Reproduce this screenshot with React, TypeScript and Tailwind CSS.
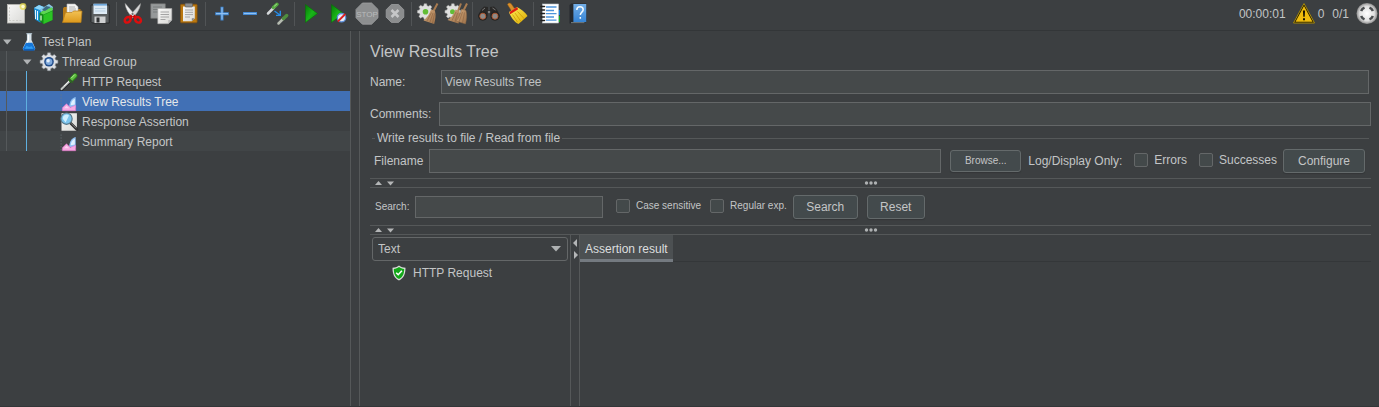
import React from "react";

type IconProps = { children: React.ReactNode; className?: string };

function Icon({ children, className = "h-6 w-6" }: IconProps) {
  return (
    <svg viewBox="0 0 24 24" className={className} aria-hidden="true">
      {children}
    </svg>
  );
}

function Defs() {
  return (
    <svg className="absolute h-0 w-0" aria-hidden="true">
      <defs>
        <linearGradient id="green" x1="0" y1="0" x2="1" y2="1">
          <stop offset="0" stopColor="#067a06" />
          <stop offset="0.5" stopColor="#19b419" />
          <stop offset="1" stopColor="#0a8a0a" />
        </linearGradient>
        <linearGradient id="paper" x1="0" y1="0" x2="1" y2="1">
          <stop offset="0" stopColor="#f8f8f7" />
          <stop offset="1" stopColor="#d9d9d6" />
        </linearGradient>
        <linearGradient id="folder" x1="0" y1="0" x2="0" y2="1">
          <stop offset="0" stopColor="#f2c255" />
          <stop offset="1" stopColor="#dd991c" />
        </linearGradient>
        <linearGradient id="sky" x1="0" y1="0" x2="0" y2="1">
          <stop offset="0" stopColor="#a5d1f5" />
          <stop offset="1" stopColor="#3f8ad6" />
        </linearGradient>
        <linearGradient id="straw" x1="0" y1="0" x2="1" y2="1">
          <stop offset="0" stopColor="#d6ab7e" />
          <stop offset="1" stopColor="#9c7048" />
        </linearGradient>
        <linearGradient id="yellow" x1="0" y1="0" x2="1" y2="1">
          <stop offset="0" stopColor="#fff15a" />
          <stop offset="1" stopColor="#dba800" />
        </linearGradient>
        <radialGradient id="silver">
          <stop offset="0" stopColor="#ffffff" />
          <stop offset="0.7" stopColor="#dedede" />
          <stop offset="1" stopColor="#8d8d8d" />
        </radialGradient>
      </defs>
    </svg>
  );
}

const NewIcon = () => (
  <Icon>
    <rect x="3.5" y="2.5" width="17" height="18.5" fill="url(#paper)" stroke="#b9b9b4" strokeWidth="0.8" />
    <path d="M5.5 5v14M5 18.5h13" stroke="#c6c6c2" strokeWidth="0.8" strokeDasharray="2 1.5" />
    <circle cx="19" cy="4.5" r="3.4" fill="#e8dc4c" opacity="0.75" />
    <circle cx="19" cy="4.5" r="1.7" fill="#fffbd0" />
  </Icon>
);

const TemplatesIcon = () => (
  <Icon>
    <path d="M2 6l5-3 5 2v14l-4 1.5-5-3z" fill="#1b8fd6" />
    <path d="M2 6l5-3 5 2-4 3z" fill="#8fd6fa" />
    <path d="M8 8l4-3 5-3 4 3v3L10 11z" fill="#8cc9e8" />
    <path d="M3.5 8v9M5.5 9v9" stroke="#e3f5ff" strokeWidth="1" />
    <path d="M7.5 11l4-2.5 9-3v12.5l-9 4-4-3z" fill="#128a18" />
    <path d="M11.5 13l9-4v9l-9 4z" fill="#2cc424" />
    <path d="M8 11l3.5-2.5 8.5-3 .5 3-9 4z" fill="#5ed653" />
    <path d="M9 13.5v5" stroke="#e7ffe1" strokeWidth="1.2" />
    <path d="M14 4l5 1-6 4-3-1z" fill="#3b6980" />
  </Icon>
);

const OpenIcon = () => (
  <Icon>
    <path d="M3 6.5l1-1.5h5l1 2h10.5v12H3z" fill="#b87b17" />
    <path d="M7 2h8l3 2.8V13H7z" fill="#f4f4f2" stroke="#bbb" strokeWidth="0.6" />
    <path d="M9 5h6M9 7h7M9 9h7" stroke="#a7a7a7" strokeWidth="0.9" />
    <path d="M5.5 10.5H12l1.5-1.5h8.5l-1 11.5H2.5z" fill="url(#folder)" stroke="#b87d17" strokeWidth="0.7" />
  </Icon>
);

const SaveIcon = () => (
  <Icon>
    <path d="M3 3h18.2v18H4.5L3 19.5z" fill="#5b5f61" stroke="#242627" strokeWidth="0.9" />
    <rect x="5.5" y="1.8" width="13.5" height="10.2" fill="#deebf5" />
    <rect x="5.5" y="1.8" width="13.5" height="1.8" fill="#6fa8db" />
    <path d="M7 6.5h10.5M7 9h10.5" stroke="#b9d0e2" strokeWidth="1" />
    <rect x="6.5" y="14.5" width="11" height="6.5" fill="#cfd1d2" />
    <rect x="8.500" y="15.500" width="3" height="5" fill="#303334" />
  </Icon>
);

const CutIcon = () => (
  <Icon>
    <path d="M4.200 1.500L14.500 13.500l-3 2.500C8 11.500 4.500 7 4.200 1.500z" fill="#efefef" stroke="#a5a5a5" strokeWidth="0.500" />
    <path d="M19.500 1.500L8.800 13.500l3 2.500c3.800-4.500 7.400-9 7.700-14.500z" fill="#d8d8d8" stroke="#999" strokeWidth="0.500" />
    <circle cx="11.700" cy="12" r="0.900" fill="#6b6b6b" />
    <path d="M11 13.700L8 16.500M12.500 13.700l3 2.800" stroke="#c90808" strokeWidth="3.200" />
    <ellipse cx="6.700" cy="17.800" rx="3.200" ry="2.500" fill="none" stroke="#dc0e0e" strokeWidth="2.500" transform="rotate(-40 6.700 17.800)" />
    <ellipse cx="17" cy="17.800" rx="3.200" ry="2.500" fill="none" stroke="#dc0e0e" strokeWidth="2.500" transform="rotate(40 17 17.800)" />
  </Icon>
);

const CopyIcon = () => (
  <Icon>
    <path d="M1.800 1.800h14.500v14.500H1.800z" fill="#96999a" stroke="#777" strokeWidth="0.600" />
    <path d="M4 5h9M4 7.500h6M4 10h6" stroke="#777a7b" strokeWidth="0.900" />
    <path d="M8.800 6.500h14V18l-3.500 3.700H8.800z" fill="url(#paper)" stroke="#aaa" strokeWidth="0.600" />
    <path d="M11.500 10h8.500M11.500 12.500h8.500M11.500 15h8.500M11.500 17.500h5" stroke="#a4a4a4" strokeWidth="1" />
    <path d="M22.800 18h-3.500v3.700z" fill="#bcbcbc" />
  </Icon>
);

const PasteIcon = () => (
  <Icon>
    <rect x="3.500" y="2.300" width="16.600" height="18.500" rx="1" fill="#b9770f" stroke="#87530b" strokeWidth="0.800" />
    <path d="M6 4.500h11.800v11.800l-3 3H6z" fill="url(#paper)" />
    <rect x="8" y="1.200" width="7.500" height="3.800" rx="1" fill="#8b8e90" stroke="#555" strokeWidth="0.600" />
    <path d="M8 8h8M8 10.300h8M8 12.600h8M8 15h5" stroke="#a5a5a5" strokeWidth="1" />
    <path d="M17.800 16.300h-3v3z" fill="#888" />
  </Icon>
);

const PlusIcon = () => (
  <Icon>
    <path d="M12 4.800v13.700M5.200 11.700h13.600" stroke="#3f86d2" strokeWidth="3" />
    <path d="M12 5.600v12M6 11.700h12" stroke="#8fc1f2" strokeWidth="1.200" />
  </Icon>
);

const MinusIcon = () => (
  <Icon>
    <path d="M5 11.500h14" stroke="#3f86d2" strokeWidth="3" />
    <path d="M5.800 11.500h12.400" stroke="#8fc1f2" strokeWidth="1.200" />
  </Icon>
);

const ToggleIcon = () => (
  <Icon>
    <path d="M2 11.500L8 5.500" stroke="#d5d8da" strokeWidth="2.500" strokeLinecap="round" />
    <path d="M7.500 5.500L11 2.300" stroke="#57ab42" strokeWidth="3.400" strokeLinecap="round" />
    <path d="M8.500 4L10.500 2.300" stroke="#a5e08f" strokeWidth="1" strokeLinecap="round" />
    <path d="M8.500 9l5 3.700M14.300 8.800v4.600H10" fill="none" stroke="#268de8" strokeWidth="1.400" />
    <path d="M12.500 21.500l5-5" stroke="#b5bbb0" strokeWidth="2.500" strokeLinecap="round" />
    <path d="M17.500 16.500L20.700 13.500" stroke="#4f8f3e" strokeWidth="3.400" strokeLinecap="round" />
  </Icon>
);

const PlayIcon = () => (
  <Icon>
    <path d="M6.500 2.500l12 9-12 9z" fill="url(#green)" stroke="#087108" strokeWidth="0.600" />
  </Icon>
);

const PlayNoTimersIcon = () => (
  <Icon>
    <path d="M4.500 2.500l12 9-12 9z" fill="url(#green)" stroke="#087108" strokeWidth="0.600" />
    <circle cx="14.500" cy="15.700" r="4.200" fill="#e4edfa" stroke="#5d8fda" strokeWidth="1.300" />
    <path d="M10.800 19.500l7.500-7.500" stroke="#dd2020" strokeWidth="1.800" />
  </Icon>
);

const StopIcon = () => (
  <Icon>
    <path d="M7.400 1h9.200l6.400 6.400v8.400L16.600 22.200H7.400L1 15.800V7.400z" fill="#8d8f90" stroke="#9ea0a1" strokeWidth="0.800" />
    <text x="12" y="14.800" textAnchor="middle" fontSize="8" fill="#b9bbbc" fontFamily="Liberation Sans, sans-serif">STOP</text>
  </Icon>
);

const ShutdownIcon = () => (
  <Icon>
    <path d="M8.400 2.500h7.200l5.200 5.200v7.500l-5.200 5.200H8.400l-5.200-5.200V7.700z" fill="#8b8d8e" stroke="#9b9d9e" strokeWidth="0.800" />
    <path d="M8.500 8l7 7M15.500 8l-7 7" stroke="#c6c7c8" strokeWidth="2.600" />
  </Icon>
);

const gearPath =
  "M10.300 1h3.400l.5 2.600 2 .8 2.200-1.500 2.400 2.400-1.500 2.200.8 2 2.600.5v3.400l-2.600.5-.8 2 1.500 2.200-2.400 2.400-2.200-1.500-2 .8-.5 2.600h-3.400l-.5-2.600-2-.8-2.200 1.500-2.400-2.400 1.500-2.200-.8-2-2.600-.5V10l2.600-.5.8-2-1.500-2.200 2.400-2.400 2.200 1.500 2-.8z";

const ClearIcon = () => (
  <Icon>
    <g transform="translate(0.500 1) scale(0.740)">
      <path d={gearPath} fill="#dfe0df" stroke="#a6a6a6" strokeWidth="0.700" />
    </g>
    <circle cx="9.500" cy="9.800" r="2.800" fill="#62bd35" />
    <path d="M21.500 1.500L17 10" stroke="#a87b50" strokeWidth="2" />
    <path d="M15 7.500l4 1.500c1.200 4 .3 9-.8 13L7.500 18.500c3.500-2.500 6-6.500 7.500-11z" fill="url(#straw)" />
    <path d="M15.500 10.500L11 19M17 11l-3 9M18.500 11.500L16.500 21" stroke="#8a6240" strokeWidth="0.600" />
  </Icon>
);

const ClearAllIcon = () => (
  <Icon>
    <g transform="translate(0 1) scale(0.740)">
      <path d={gearPath} fill="#dfe0df" stroke="#a6a6a6" strokeWidth="0.700" />
    </g>
    <circle cx="8.500" cy="9.800" r="2.500" fill="#62bd35" />
    <path d="M17 1.500l-3 7.500M23 1.500l-3.500 7" stroke="#a87b50" strokeWidth="2" />
    <path d="M11.500 7.500l4 1.500c1 4 0 8.500-1 12.500l-11-3.500c3.500-2 6.500-6 8-10.500z" fill="url(#straw)" />
    <path d="M17.500 7l4.500 1.500c1.200 4 .7 9.500-.5 13.500l-9.500-3c3-3 4.500-7.500 5.500-12z" fill="url(#straw)" stroke="#7f5f42" strokeWidth="0.400" />
    <path d="M12 10L8 18.500M13.500 11L11 20M18.500 10L15 20M20.500 10.500L18.500 21" stroke="#8a6240" strokeWidth="0.600" />
  </Icon>
);

const BinocularsIcon = () => (
  <Icon>
    <path d="M4 7.500L7 4.500l4 .5v3h2V5l4-.5 3 3 3 7H14l-1-4h-2l-1 4H1z" fill="#292827" />
    <circle cx="5.800" cy="14" r="4.700" fill="#242321" />
    <circle cx="18" cy="14" r="4.700" fill="#242321" />
    <circle cx="5.800" cy="14.200" r="3" fill="#8d8a88" stroke="#b4562c" strokeWidth="0.900" />
    <circle cx="18" cy="14.200" r="3" fill="#8d8a88" stroke="#b4562c" strokeWidth="0.900" />
    <path d="M5 8.500L8 6M15.500 6l3 2" stroke="#777" strokeWidth="1" />
    <circle cx="12" cy="10" r="1.300" fill="#7c7c7c" />
  </Icon>
);

const BroomIcon = () => (
  <Icon>
    <path d="M2.500 2.500C3 1 4.500.5 6 1.500l3.500 5L6.500 9z" fill="#d9902b" stroke="#9b5e15" strokeWidth="0.500" />
    <path d="M4 10l8-5c3 1.500 8 5 10.500 9L13.500 22c-4-1.500-8-7-9.500-12z" fill="url(#yellow)" />
    <path d="M4.500 10l7.500-5 1.200 2.300-8 5z" fill="#dc1f12" />
    <path d="M7.500 12.500l5 7.500M10 11l6 8.500M12.500 9.500l7 7.500" stroke="#c79300" strokeWidth="0.700" />
  </Icon>
);

const FunctionIcon = () => (
  <Icon>
    <path d="M20 8h2v5h-2z" fill="#1578d1" />
    <path d="M20 14h2v6h-2z" fill="#14a51e" />
    <rect x="4.500" y="2" width="16" height="19" fill="#fff" stroke="#bfc6cc" strokeWidth="0.600" />
    <path d="M8 5h10.500M8 8.500h8M8 11.700h10.500M8 15h8M8 18.200h10.500" stroke="#4c94db" strokeWidth="1.300" />
    <path d="M3 4.500h3.500M3 8h3.500M3 11.500h3.500M3 15h3.500M3 18.500h3.500" stroke="#202020" strokeWidth="1.500" strokeLinecap="round" />
  </Icon>
);

const HelpIcon = () => (
  <Icon>
    <path d="M3.500 3l2-1.500h15V19l-2 2.500h-15z" fill="#24292e" />
    <path d="M7.500 2h12.700v18H7.500z" fill="url(#sky)" />
    <path d="M7.500 2h12.700v18H7.500z" fill="#287bd3" opacity="0.400" />
    <path d="M5 20.700h13.500" stroke="#b9c2c8" strokeWidth="0.600" />
    <path d="M10.800 8c0-2.200 1.300-3.200 3.200-3.200s3.200 1.100 3.200 2.900c0 2.300-2.900 2.600-2.900 5.300M14.300 15v1.800" fill="none" stroke="#f4fbff" strokeWidth="1.500" />
  </Icon>
);

const groups: { label: string; icon: React.ReactNode; disabled?: boolean }[][] = [
  [
    { label: "New", icon: <NewIcon /> },
    { label: "Templates", icon: <TemplatesIcon /> },
    { label: "Open", icon: <OpenIcon /> },
    { label: "Save", icon: <SaveIcon /> },
  ],
  [
    { label: "Cut", icon: <CutIcon /> },
    { label: "Copy", icon: <CopyIcon /> },
    { label: "Paste", icon: <PasteIcon /> },
  ],
  [
    { label: "Expand All", icon: <PlusIcon /> },
    { label: "Collapse All", icon: <MinusIcon /> },
    { label: "Toggle", icon: <ToggleIcon /> },
  ],
  [
    { label: "Start", icon: <PlayIcon /> },
    { label: "Start no pauses", icon: <PlayNoTimersIcon /> },
    { label: "Stop", icon: <StopIcon />, disabled: true },
    { label: "Shutdown", icon: <ShutdownIcon />, disabled: true },
  ],
  [
    { label: "Clear", icon: <ClearIcon /> },
    { label: "Clear All", icon: <ClearAllIcon /> },
  ],
  [
    { label: "Search", icon: <BinocularsIcon /> },
    { label: "Reset Search", icon: <BroomIcon /> },
  ],
  [
    { label: "Function Helper", icon: <FunctionIcon /> },
    { label: "Help", icon: <HelpIcon /> },
  ],
];

function Toolbar() {
  return (
    <header className="flex h-[31px] shrink-0 items-start border-b border-[#333638] pl-0.5">
      {groups.map((group, i) => (
        <div key={i} className="flex">
          {i > 0 && <span className="mx-0.5 mt-0.5 h-6 w-px bg-[#515456]" />}
          {group.map((item) => (
            <button key={item.label} type="button" aria-label={item.label} disabled={item.disabled} className="flex h-7 w-7 items-center justify-center">
              {item.icon}
            </button>
          ))}
        </div>
      ))}
      <div className="ml-auto flex h-7 items-center">
        <span>00:00:01</span>
        <button type="button" aria-label="Show log" className="ml-1.5 flex items-center gap-0.5">
          <Icon>
            <path d="M12 1.500L22.500 21h-21z" fill="#171300" stroke="#a88a08" strokeWidth="1" strokeLinejoin="round" />
            <path d="M12 4L20.500 19.700h-17z" fill="#f0bd0c" />
            <path d="M10.900 8.500h2.200l-.4 6.300h-1.400zM11 16.300h2v2h-2z" fill="#171300" />
          </Icon>
          0
        </button>
        <span className="ml-2">0/1</span>
        <Icon className="ml-1.5 h-6 w-6">
          <circle cx="12" cy="11.500" r="10.500" fill="url(#silver)" />
          <path d="M9.500 5.600A6.500 6.500 0 0 0 6.100 9M6.100 14a6.500 6.500 0 0 0 3.400 3.400M14.500 17.400a6.500 6.500 0 0 0 3.400-3.400M17.900 9A6.500 6.500 0 0 0 14.500 5.600" fill="none" stroke="#4a4d4f" strokeWidth="2.500" />
        </Icon>
      </div>
    </header>
  );
}

const FlaskIcon = () => (
  <Icon className="h-5 w-5">
    <path d="M9.500 1.500h5.500v8L19.500 19.500l-1 2.500h-13l-1-2.500L9.500 9.500z" fill="#d5e1e9" />
    <path d="M8.300 13h7.700l3.500 7-1 2h-13l-1-2z" fill="#1576d8" />
    <path d="M9 16.500l3 1.500 3.500-1 1.500 3H7z" fill="#2f9cf2" />
    <path d="M5.500 21h13l-.5 1.500h-12z" fill="#0a4fa0" />
    <path d="M8.800 2h7" stroke="#a9bbc6" strokeWidth="1.300" />
    <path d="M11.500 3v6.500L9.500 13" fill="none" stroke="#fff" strokeWidth="1.300" />
  </Icon>
);

const GearIcon = () => (
  <Icon className="h-5 w-5">
    <path d={gearPath} fill="#dcdfe3" stroke="#8a8f96" strokeWidth="0.700" />
    <circle cx="12" cy="11.700" r="5.800" fill="#234e8c" />
    <circle cx="12" cy="11.700" r="4" fill="#7fa9dc" />
    <circle cx="11" cy="10.500" r="2" fill="#e3effb" />
  </Icon>
);

const PipetteIcon = () => (
  <Icon className="h-5 w-5">
    <path d="M3 21L14 10" stroke="#25282a" strokeWidth="4" strokeLinecap="round" />
    <path d="M3 20.500L14 9.500" stroke="#c3c8c6" strokeWidth="2.600" strokeLinecap="round" />
    <path d="M6 17l7-7" stroke="#fff" strokeWidth="1" />
    <path d="M14.500 9.500l4.800-5" stroke="#2c7c1c" strokeWidth="6" strokeLinecap="round" />
    <path d="M15 8.500l4.200-4.300" stroke="#5fbd41" strokeWidth="4" strokeLinecap="round" />
    <path d="M15 7l3.500-3.500" stroke="#b0ea95" strokeWidth="1.200" strokeLinecap="round" />
    <path d="M11.500 7.500l5 5" stroke="#35592c" strokeWidth="1.800" strokeLinecap="round" />
  </Icon>
);

const ChartIcon = () => (
  <Icon className="h-5 w-5">
    <path d="M2.500 3v19" stroke="#707a80" strokeWidth="0.900" strokeDasharray="1.500 2" />
    <path d="M20 6v13l-8-1c.5-6 3-11 8-12z" fill="#8fc0f3" />
    <path d="M19 8v7l-5 1c.4-4 2-7 5-8z" fill="#e0f0ff" />
    <path d="M4 22.500V19l5-5 4.500 4.500L20 16v6.500z" fill="#f6a8e2" stroke="#e56cc9" strokeWidth="0.600" />
    <path d="M6 19.500l3-3 3.500 3z" fill="#fbd3f0" />
  </Icon>
);

const AssertionIcon = () => (
  <Icon className="h-5 w-5">
    <path d="M3 1.500h18.500v21H3z" fill="url(#paper)" />
    <path d="M14 13.500l7.500 7.500" stroke="#303030" strokeWidth="3.200" strokeLinecap="round" />
    <path d="M14.500 13.500l6 6" stroke="#909090" strokeWidth="1" />
    <circle cx="9" cy="8" r="6.800" fill="#7cc4ed" stroke="#557687" strokeWidth="1.400" />
    <path d="M4.500 8A4.500 4.500 0 0 1 12 4.200L8 12.500z" fill="#cfefff" />
  </Icon>
);

type RowProps = {
  label: string;
  icon: React.ReactNode;
  level: 1 | 2 | 3;
  expanded?: boolean;
  striped?: boolean;
  selected?: boolean;
};

const indent = { 1: "pl-0.5", 2: "pl-[22px]", 3: "pl-[42px]" };

function TreeRow({ label, icon, level, expanded, striped, selected }: RowProps) {
  const background = selected ? "bg-[#4170b5] text-[#e4e7ea]" : striped ? "bg-[#414547]" : "";
  return (
    <li
      role="treeitem"
      aria-level={level}
      aria-selected={Boolean(selected)}
      aria-expanded={expanded}
      className={`relative flex h-5 items-center pt-0.5 ${indent[level]} ${background}`}
    >
      {level > 1 && <span className="absolute inset-y-0 left-1.5 w-px bg-[#55595b]" />}
      {level > 2 && <span className="absolute inset-y-0 left-[26px] w-px bg-[#5fb0e0]" />}
      <svg viewBox="0 0 10 10" className="h-2.5 w-2.5 shrink-0" aria-hidden="true">
        {expanded && <path d="M1 2.500h8.500L5.200 7.500z" fill="#b0b3b5" />}
      </svg>
      <span className="ml-[7px] flex">{icon}</span>
      <span className="ml-[3px]">{label}</span>
    </li>
  );
}

function Splitter() {
  return (
    <div role="separator" className="relative flex h-2.5 shrink-0 items-center justify-center border-y border-[#555859]">
      <svg viewBox="0 0 24 8" className="absolute left-1 top-0 h-2 w-6" aria-hidden="true">
        <path d="M1 6h7L4.500 2zM13 2.500h7L16.500 6.500z" fill="#b4b6b7" />
      </svg>
      <svg viewBox="0 0 14 4" className="h-1 w-3.5" aria-hidden="true">
        <circle cx="2.500" cy="2" r="1.700" fill="#aeb1b2" />
        <circle cx="7" cy="2" r="1.700" fill="#aeb1b2" />
        <circle cx="11.500" cy="2" r="1.700" fill="#aeb1b2" />
      </svg>
    </div>
  );
}

const field = "min-w-0 border border-[#646768] bg-[#45494a] px-[3px] text-xs text-[#bfc1c2] outline-none";
const button = "shrink-0 rounded-[3px] border border-[#646a6b] bg-[#434a4c] text-center shadow-[0_1px_1px_#333638]";

function Check({ label, small }: { label: string; small?: boolean }) {
  return (
    <label className={`mb-0.5 flex shrink-0 items-center gap-1.5 ${small ? "text-[10px]" : ""}`}>
      <input type="checkbox" className="h-3.5 w-3.5 appearance-none rounded-[2px] border border-[#646768] bg-[#43494a]" />
      {label}
    </label>
  );
}

export default function App() {
  return (
    <div className="flex h-screen flex-col overflow-hidden border-b border-[#333638] bg-[#3c3f41] font-['Liberation_Sans',Arial,sans-serif] text-xs leading-4 text-[#c3c5c6]">
      <Defs />
      <Toolbar />
      <div className="flex min-h-0 flex-1">
        <nav aria-label="Test plan tree" className="w-[351px] shrink-0 border-r border-[#555859]">
          <ul role="tree">
            <TreeRow label="Test Plan" icon={<FlaskIcon />} level={1} expanded />
            <TreeRow label="Thread Group" icon={<GearIcon />} level={2} expanded striped />
            <TreeRow label="HTTP Request" icon={<PipetteIcon />} level={3} />
            <TreeRow label="View Results Tree" icon={<ChartIcon />} level={3} selected />
            <TreeRow label="Response Assertion" icon={<AssertionIcon />} level={3} />
            <TreeRow label="Summary Report" icon={<ChartIcon />} level={3} striped />
          </ul>
        </nav>
        <main className="ml-2 flex min-w-0 flex-1 flex-col border-l border-[#555859] pl-2.5 pr-2">
          <h1 className="pt-[11px] text-base leading-5">View Results Tree</h1>
          <div className="mt-2 flex items-center pr-0.5">
            <label htmlFor="name" className="w-[71px] shrink-0">Name:</label>
            <input id="name" defaultValue="View Results Tree" className={`${field} h-6 flex-1`} />
          </div>
          <div className="mt-2 flex items-center">
            <label htmlFor="comments" className="w-[69px] shrink-0">Comments:</label>
            <input id="comments" className={`${field} h-6 flex-1`} />
          </div>
          <section aria-labelledby="file-group">
            <div className="mt-1 flex items-center gap-0.5 px-0.5">
              <span className="h-px w-[3px] bg-[#555859]" />
              <h2 id="file-group">Write results to file / Read from file</h2>
              <span className="h-px flex-1 bg-[#555859]" />
            </div>
            <div className="mb-[5px] mt-[3px] flex items-center pl-1 pr-1.5">
              <label htmlFor="filename" className="w-[55px] shrink-0">Filename</label>
              <input id="filename" className={`${field} h-6 flex-1`} />
              <button type="button" className={`${button} ml-[9px] h-[22px] w-[71px] text-[10px]`}>Browse...</button>
              <span className="ml-[7px] w-[106px] shrink-0">Log/Display Only:</span>
              <div className="flex gap-3">
                <Check label="Errors" />
                <Check label="Successes" />
              </div>
              <button type="button" className={`${button} ml-1.5 h-6 w-[82px]`}>Configure</button>
            </div>
          </section>
          <Splitter />
          <div className="flex h-[37px] shrink-0 items-center pl-[5px]">
            <label htmlFor="search" className="w-10 shrink-0 text-[10px]">Search:</label>
            <input id="search" className={`${field} h-[22px] w-[188px]`} />
            <div className="ml-[13px] flex gap-[9px]">
              <Check label="Case sensitive" small />
              <Check label="Regular exp." small />
            </div>
            <button type="button" className={`${button} ml-1.5 h-6 w-[65px]`}>Search</button>
            <button type="button" className={`${button} ml-[9px] h-6 w-[58px]`}>Reset</button>
          </div>
          <Splitter />
          <div className="flex min-h-0 flex-1">
            <div className="w-[201px] shrink-0 border-r border-[#555859] pl-0.5 pt-0.5">
              <div className="relative w-[196px]">
                <select aria-label="Renderer" className="h-6 w-full appearance-none rounded-[3px] border border-[#646768] bg-[#3c3f41] pl-[5px] text-xs text-[#c3c5c6]">
                  <option>Text</option>
                </select>
                <svg viewBox="0 0 10 6" className="pointer-events-none absolute right-[7px] top-[9px] h-1.5 w-2.5" aria-hidden="true">
                  <path d="M0 0h10L5 5.500z" fill="#aeb1b2" />
                </svg>
              </div>
              <div className="ml-[19px] mt-1 flex items-center gap-1.5">
                <svg viewBox="0 0 16 16" className="h-4 w-4" aria-hidden="true">
                  <path d="M8 .5c2 1.500 4 2.200 6.500 2.300C14.500 9 13 13 8 15.500 3 13 1.500 9 1.500 2.800 4 2.700 6 2 8 .5z" fill="#d9ded9" />
                  <path d="M8 2c1.500 1.100 3.200 1.700 5.200 1.900C13.100 9 11.700 12 8 14 4.300 12 2.900 9 2.800 3.900 4.800 3.700 6.500 3.100 8 2z" fill="#12a818" />
                  <path d="M5.200 7.700l2 2 3.700-3.900" fill="none" stroke="#fff" strokeWidth="1.600" />
                </svg>
                HTTP Request
              </div>
            </div>
            <div role="separator" className="w-2 shrink-0">
              <svg viewBox="0 0 8 30" className="h-[30px] w-2" aria-hidden="true">
                <path d="M6 4v8L2 8zM3 16v8l4-4z" fill="#b4b6b7" />
              </svg>
            </div>
            <div className="min-w-0 flex-1 border-l border-[#555859]">
              <div role="tablist" className="flex border-b border-[#343739]">
                <button type="button" role="tab" aria-selected="true" className="-mb-px h-[27px] border-b-[3px] border-[#747a80] bg-[#4c5052] px-[5px] pt-[3px] text-[#dcdedf]">
                  Assertion result
                </button>
              </div>
            </div>
          </div>
        </main>
      </div>
    </div>
  );
}
